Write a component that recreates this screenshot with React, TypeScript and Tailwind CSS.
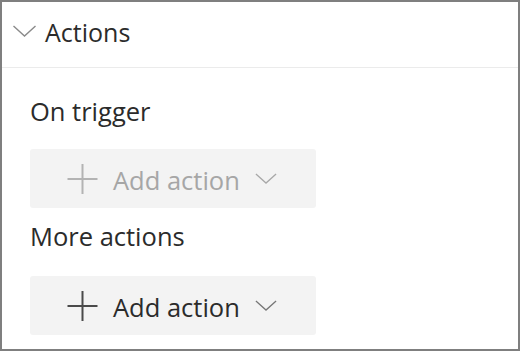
import React from "react";

const Chevron = ({ className }: { className?: string }) => (
  <svg viewBox="0 0 24 12" fill="none" className={className}>
    <path d="M1 1 L12 11 L23 1" stroke="currentColor" strokeWidth="1.4" />
  </svg>
);

const Plus = ({ className }: { className?: string }) => (
  <svg viewBox="0 0 30 30" fill="none" className={className}>
    <path d="M15 0 V30 M0 15 H30" stroke="currentColor" strokeWidth="2" />
  </svg>
);

const AddActionButton = ({ disabled }: { disabled?: boolean }) => (
  <button
    type="button"
    disabled={disabled}
    className={
      "flex items-center w-[286px] h-[59px] rounded-[3px] bg-[#f3f3f3] pl-[37px] " +
      (disabled ? "text-[#a6a6a6]" : "text-[#2b2b2b]")
    }
  >
    <Plus className={"w-[31px] h-[30px] " + (disabled ? "text-[#b3b3b3]" : "text-[#4a4a4a]")} />
    <span className="ml-[15px] pt-[4px] text-[25.5px] leading-none">Add action</span>
    <Chevron className={"ml-[15px] w-[22px] h-[11px] " + (disabled ? "text-[#a8a8a8]" : "text-[#777]")} />
  </button>
);

export default function App() {
  return (
    <div
      className="w-[520px] h-[351px] border-2 border-[#7f7f7f] bg-white text-[#2b2b2b] overflow-hidden"
      style={{ fontFamily: '"Open Sans", "Noto Sans", sans-serif' }}
    >
      <div className="flex items-start h-[66px] border-b border-[#ebebeb] pl-[10px]">
        <Chevron className="mt-[23px] w-[25px] h-[12px] text-[#8a8a8a]" />
        <span className="ml-[8px] mt-[18px] text-[25px] leading-none">Actions</span>
      </div>
      <div className="pl-[28px] flex flex-col">
        <div className="mt-[30px] text-[25.5px] leading-[26px]">On trigger</div>
        <div className="mt-[25px]">
          <AddActionButton disabled />
        </div>
        <div className="mt-[15px] text-[25.5px] leading-[26px]">More actions</div>
        <div className="mt-[27px]">
          <AddActionButton />
        </div>
      </div>
    </div>
  );
}
